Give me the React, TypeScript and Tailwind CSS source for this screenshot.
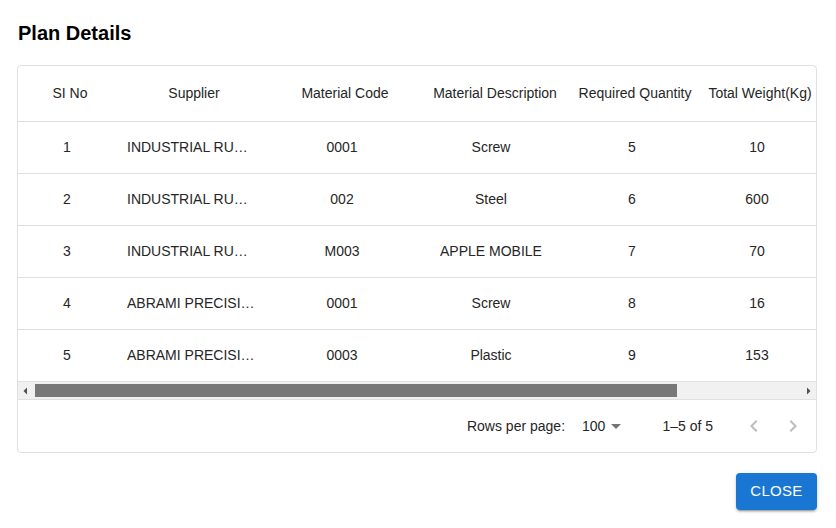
import React from 'react';

interface PlanRow {
    sl: number;
    supplier: string;
    code: string;
    description: string;
    qty: number;
    weight: number;
    uom: string;
}

const rows: PlanRow[] = [
    { sl: 1, supplier: 'INDUSTRIAL RUBBER PRODUCTS', code: '0001', description: 'Screw', qty: 5, weight: 10, uom: 'Nos' },
    { sl: 2, supplier: 'INDUSTRIAL RUBBER PRODUCTS', code: '002', description: 'Steel', qty: 6, weight: 600, uom: 'Kg' },
    { sl: 3, supplier: 'INDUSTRIAL RUBBER PRODUCTS', code: 'M003', description: 'APPLE MOBILE', qty: 7, weight: 70, uom: 'Nos' },
    { sl: 4, supplier: 'ABRAMI PRECISION TOOLS', code: '0001', description: 'Screw', qty: 8, weight: 16, uom: 'Nos' },
    { sl: 5, supplier: 'ABRAMI PRECISION TOOLS', code: '0003', description: 'Plastic', qty: 9, weight: 153, uom: 'Kg' },
];

const headers = ['SI No', 'Supplier', 'Material Code', 'Material Description', 'Required Quantity', 'Total Weight(Kg)', 'UOM'];
const widths = ['w-[100px] pl-[4px]', 'w-[152px]', 'w-[150px]', 'w-[150px]', 'w-[130px]', 'w-[120px]', 'w-[150px]'];

export default function App() {
    return (
        <div className="w-[836px] h-[528px] bg-white text-[#262626] font-['Liberation_Sans',Arial,sans-serif] overflow-hidden">
            <h2 className="pl-[18px] pt-[17px] text-[20px] leading-[32px] font-bold text-black">Plan Details</h2>

            <div className="ml-[17px] mt-[16px] w-[800px] rounded border border-[#e0e0e0] overflow-hidden">
                <div className="overflow-hidden">
                    <div className="w-[952px] text-[14px]">
                        <div className="flex h-[56px] items-center border-b border-[#e0e0e0]">
                            {headers.map((h, i) => (
                                <div key={h} className={`${widths[i]} shrink-0 text-center whitespace-nowrap`}>
                                    {h}
                                </div>
                            ))}
                        </div>
                        {rows.map((r) => (
                            <div key={r.sl} className="flex h-[52px] items-center border-b border-[#e0e0e0]">
                                <div className="w-[100px] shrink-0 text-center pr-[2px]">{r.sl}</div>
                                <div className="w-[152px] shrink-0 pl-[9px] pr-[15px] truncate">{r.supplier}</div>
                                <div className="w-[150px] shrink-0 text-center pr-[6px]">{r.code}</div>
                                <div className="w-[150px] shrink-0 text-center pr-[8px]">{r.description}</div>
                                <div className="w-[130px] shrink-0 text-center pr-[6px]">{r.qty}</div>
                                <div className="w-[120px] shrink-0 text-center pr-[6px]">{r.weight}</div>
                                <div className="w-[150px] shrink-0 text-center">{r.uom}</div>
                            </div>
                        ))}
                    </div>
                </div>

                {/* horizontal scrollbar */}
                <div className="flex h-[18px] items-center bg-[#f1f1f1] border-b border-[#e0e0e0]">
                    <div className="w-[16px] h-full flex items-center justify-center">
                        <svg width="8" height="8" viewBox="0 0 8 8">
                            <path d="M1.5 4 5 0.5v7z" fill="#505050" />
                        </svg>
                    </div>
                    <div className="flex-1 h-full flex items-center">
                        <div className="ml-[1px] w-[642px] h-[13px] bg-[#787878]" />
                    </div>
                    <div className="w-[16px] h-full flex items-center justify-center">
                        <svg width="8" height="8" viewBox="0 0 8 8">
                            <path d="M6.5 4 3 0.5v7z" fill="#505050" />
                        </svg>
                    </div>
                </div>

                {/* pagination */}
                <div className="flex h-[52px] items-center justify-end pr-[11px] text-[14px]">
                    <span>Rows per page:</span>
                    <div className="ml-[17px] flex items-center">
                        <span>100</span>
                        <svg className="ml-[-1px]" width="24" height="24" viewBox="0 0 24 24">
                            <path d="M7 10l5 5 5-5z" fill="#757575" />
                        </svg>
                    </div>
                    <span className="ml-[34px]">1–5 of 5</span>
                    <svg className="ml-[29px]" width="24" height="24" viewBox="0 0 24 24">
                        <path d="M15.41 7.41 14 6l-6 6 6 6 1.41-1.41L10.83 12z" fill="#bdbdbd" />
                    </svg>
                    <svg className="ml-[15px]" width="24" height="24" viewBox="0 0 24 24">
                        <path d="M10 6 8.59 7.41 13.17 12l-4.58 4.59L10 18l6-6z" fill="#bdbdbd" />
                    </svg>
                </div>
            </div>

            <div className="flex justify-end pr-[19px] mt-[20px]">
                <button className="h-[37px] w-[81px] rounded bg-[#1976d2] text-white text-[15px] uppercase tracking-[0.3px] shadow-[0_3px_1px_-2px_rgba(0,0,0,0.2),0_2px_2px_0_rgba(0,0,0,0.14),0_1px_5px_0_rgba(0,0,0,0.12)]">
                    Close
                </button>
            </div>
        </div>
    );
}
